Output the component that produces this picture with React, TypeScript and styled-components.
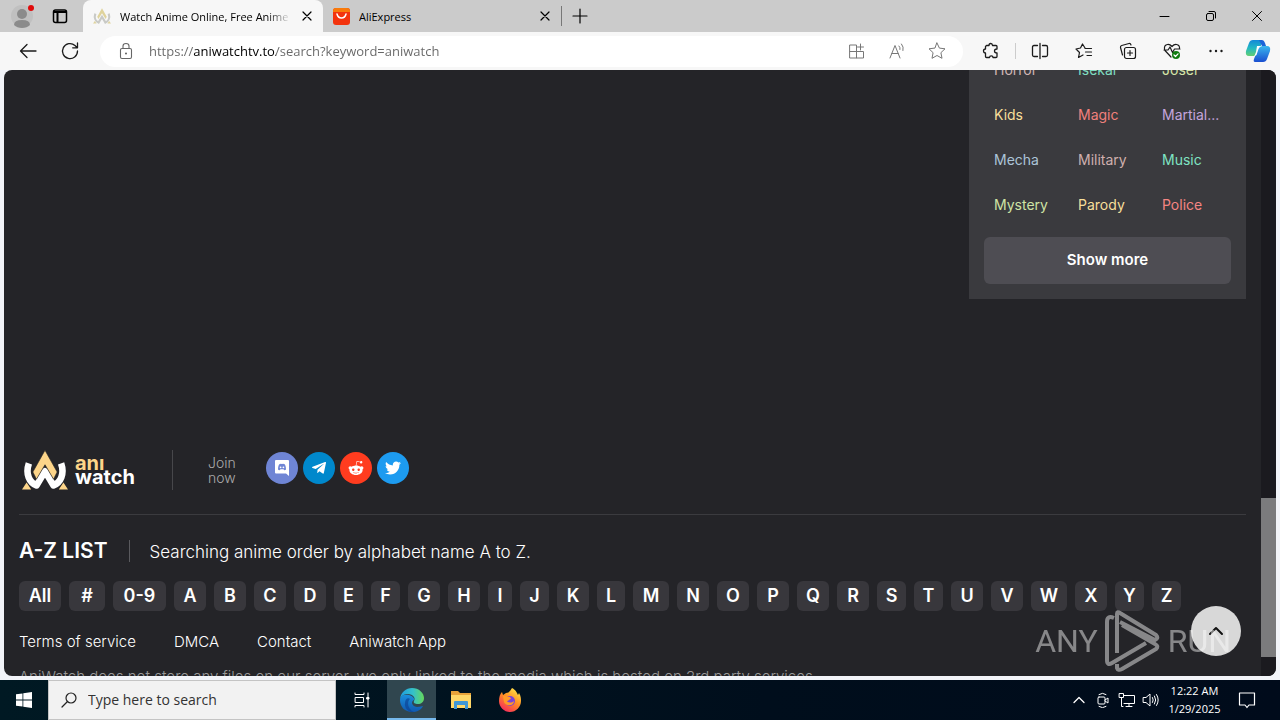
import React from "react";
import styled, { createGlobalStyle } from "styled-components";
import { FaTelegramPlane, FaRedditAlien, FaTwitter } from "react-icons/fa";

const uiFont = `"Open Sans", "Noto Sans", sans-serif`;
const siteFont = `Inter, "Liberation Sans", sans-serif`;

const GlobalStyle = createGlobalStyle`
  *, *::before, *::after { box-sizing: border-box; }
  body { margin: 0; font-family: ${uiFont}; overflow: hidden; }
  button { border: 0; padding: 0; background: none; color: inherit; font: inherit; cursor: pointer; }
  a { color: inherit; text-decoration: none; }
  h2, p, ul { margin: 0; padding: 0; }
  svg { display: block; flex: none; }
`;

const Desktop = styled.div`
  display: flex;
  flex-direction: column;
  height: 100vh;
`;

/* ---------- browser chrome ---------- */

const Browser = styled.div`
  flex: 1;
  min-height: 0;
  display: flex;
  flex-direction: column;
  background: #f2f4f9;
`;

const TabStrip = styled.div`
  display: flex;
  height: 32px;
  background: #cbcbcb;
`;

const ProfileArea = styled.div`
  display: flex;
  align-items: center;
  gap: 16px;
  width: 83px;
  padding-left: 10px;
`;

const Tab = styled.div<{ $active?: boolean }>`
  display: flex;
  align-items: center;
  width: ${(p) => (p.$active ? 240 : 238)}px;
  padding: 0 9px 0 ${(p) => (p.$active ? 10 : 10)}px;
  gap: 9px;
  background: ${(p) => (p.$active ? "#f7f7f7" : "transparent")};
  border-radius: 8px 8px 0 0;
  font-size: 11px;
  color: #000;
`;

const TabTitle = styled.span<{ $fade?: boolean }>`
  flex: 1;
  min-width: 0;
  overflow: hidden;
  white-space: nowrap;
  ${(p) => p.$fade && "mask-image: linear-gradient(to right, #000 86%, transparent);"}
`;

const TabDivider = styled.div`
  width: 1px;
  height: 20px;
  margin: 6px 10px 0 0;
  background: #777;
`;

const WindowControls = styled.div`
  display: flex;
  align-items: center;
  margin-left: auto;
`;

const WindowButton = styled.button`
  display: grid;
  place-items: center;
  width: 46px;
  height: 32px;
`;

const Toolbar = styled.div`
  display: flex;
  align-items: center;
  height: 38px;
  padding: 0 2px 0 16px;
  background: #f7f7f7;
`;

const IconButton = styled.button<{ $width?: number; $muted?: boolean }>`
  display: grid;
  place-items: center;
  width: ${(p) => p.$width ?? 44}px;
  height: 24px;
  color: ${(p) => (p.$muted ? "#777" : "#1b1b1b")};
`;

const AddressBar = styled.div`
  flex: 1;
  display: flex;
  align-items: center;
  height: 31px;
  margin: 0 6px 0 0;
  padding: 0 6px 0 16px;
  border-radius: 16px;
  background: #fff;
  color: #666;
`;

const AddressInput = styled.input`
  flex: 1;
  min-width: 0;
  margin-left: 13px;
  padding: 0;
  border: 0;
  outline: 0;
  font: 13px/20px ${uiFont};
  color: #666;
  background: linear-gradient(to right, #666 45px, #000 45px, #000 127px, #666 127px);
  background-clip: text;
  -webkit-text-fill-color: transparent;
`;

const ToolDivider = styled.div`
  width: 1px;
  height: 16px;
  margin: 0 2px;
  background: #ccc;
`;

/* ---------- web page ---------- */

const Viewport = styled.div`
  position: relative;
  flex: 1;
  min-height: 0;
  display: flex;
  margin: 0 4px 4px;
  border-radius: 8px;
  overflow: hidden;
  background: #242428;
  font-family: ${siteFont};
  color: #fff;
`;

const Page = styled.main`
  flex: 1;
  min-width: 0;
  padding: 0 15px;
`;

const GenrePanel = styled.section`
  width: 277px;
  margin: -23px 0 150px auto;
  padding: 0 15px 15px;
  background: #3a3a3e;
`;

const GenreGrid = styled.div`
  display: grid;
  grid-template-columns: 84px 84px 79px;
  grid-auto-rows: 45px;
  align-items: center;
  font-size: 14px;
`;

const GenreLink = styled.a<{ $color: string }>`
  padding: 0 0 0 10px;
  white-space: nowrap;
  color: ${(p) => p.$color};
`;

const ShowMore = styled.button`
  width: 100%;
  height: 47px;
  margin-top: 10px;
  padding-bottom: 2px;
  border-radius: 6px;
  background: #4e4d53;
  font-size: 15px;
  font-weight: 600;
`;

const FooterTop = styled.div`
  display: flex;
  align-items: center;
  height: 66px;
  padding-bottom: 24px;
  border-bottom: 1px solid #3b3b3f;
`;

const Brand = styled.a`
  display: flex;
  align-items: center;
  gap: 7px;
  width: 154px;
  height: 40px;
  padding-left: 3px;
  border-right: 1px solid #47474b;
`;

const BrandName = styled.span`
  font-size: 20px;
  font-weight: 700;
  line-height: 14px;
`;

const Gold = styled.span`
  display: block;
  color: #fdd589;
`;

const JoinText = styled.span`
  width: 58px;
  margin-left: 35px;
  font-size: 14px;
  font-weight: 300;
  line-height: 15px;
  color: #aaa;
`;

const Socials = styled.div`
  display: flex;
  gap: 5px;
  margin-bottom: 4px;
`;

const SocialLink = styled.a<{ $color: string }>`
  display: grid;
  place-items: center;
  width: 32px;
  height: 32px;
  border-radius: 50%;
  background: ${(p) => p.$color};
`;

const ListHeader = styled.div`
  display: flex;
  align-items: center;
  height: 24px;
  margin: 24px 0 18px;
`;

const ListTitle = styled.h2`
  padding-right: 21px;
  border-right: 1px solid #5a5a5e;
  font-size: 21px;
  font-weight: 600;
  line-height: 22px;
`;

const ListHint = styled.p`
  padding: 2px 0 0 20px;
  font-size: 17px;
  font-weight: 300;
`;

const Letters = styled.div`
  display: flex;
  gap: 8px;
`;

const LetterLink = styled.a<{ $width: number }>`
  width: ${(p) => p.$width}px;
  border-radius: 6px;
  background: #38373c;
  font-size: 18px;
  font-weight: 600;
  line-height: 29px;
  padding-bottom: 1px;
  text-align: center;
`;

const FooterLinks = styled.nav`
  display: flex;
  gap: 38px;
  margin: 21px 0 15px;
  font-size: 15px;
  font-weight: 300;
  line-height: 20px;
`;

const Disclaimer = styled.p`
  font-size: 15px;
  font-weight: 300;
  line-height: 20px;
  white-space: nowrap;
  color: #999;
`;

const ScrollTrack = styled.div`
  display: flex;
  flex-direction: column;
  width: 15px;
  background: #1b1a1f;
`;

const ScrollGap = styled.div<{ $share: number }>`
  flex: ${(p) => p.$share};
`;

const ScrollThumb = styled.div`
  flex: 159;
  background: #7b7b7d;
`;

const ToTop = styled.button`
  position: absolute;
  right: 35px;
  bottom: 20px;
  display: grid;
  place-items: center;
  width: 50px;
  height: 50px;
  border-radius: 50%;
  background: #d8d8d8;
  color: #111;
`;

const Watermark = styled.div`
  position: absolute;
  right: 45px;
  bottom: 4px;
  display: flex;
  align-items: center;
  gap: 7px;
  height: 62px;
  font: 32px/62px Roboto, "Liberation Sans", sans-serif;
  color: #fff;
  opacity: 0.45;
  pointer-events: none;
`;

/* ---------- taskbar ---------- */

const Taskbar = styled.footer`
  display: flex;
  align-items: stretch;
  height: 40px;
  background: linear-gradient(to right, #001923, #000e1c 60%, #000b1b);
  color: #fff;
`;

const TaskButton = styled.button<{ $active?: boolean; $width?: number }>`
  display: grid;
  place-items: center;
  width: ${(p) => p.$width ?? 49}px;
  background: ${(p) => (p.$active ? "#30464f" : "transparent")};
  border-bottom: 2px solid ${(p) => (p.$active ? "#76b9ed" : "transparent")};
  border-top: 2px solid transparent;
`;

const SearchBox = styled.label`
  display: flex;
  align-items: center;
  gap: 11px;
  width: 288px;
  padding: 0 12px;
  border: 1px solid #c4c4c4;
  background: #f2f2f2;
  color: #222;
`;

const SearchInput = styled.input`
  flex: 1;
  min-width: 0;
  padding: 0;
  border: 0;
  outline: 0;
  background: none;
  font: 14px/20px ${uiFont};
  &::placeholder { color: #333; opacity: 1; }
`;

const Tray = styled.div`
  display: flex;
  align-items: center;
  margin-left: auto;
  padding-right: 21px;
`;

const TrayButton = styled.button`
  display: grid;
  place-items: center;
  width: 24px;
  height: 40px;
`;

const Clock = styled.time`
  width: 63px;
  margin: 0 9px 0 0;
  font-size: 11px;
  line-height: 18px;
  text-align: center;
  white-space: nowrap;
`;

/* ---------- icons ---------- */

type StrokeProps = { size?: number; width?: number; children: React.ReactNode };

const Stroke = ({ size = 20, width = 1, children }: StrokeProps) => (
  <svg width={size} height={size} viewBox={`0 0 ${size} ${size}`} fill="none" stroke="currentColor" strokeWidth={width} strokeLinecap="round" strokeLinejoin="round" aria-hidden="true">
    {children}
  </svg>
);

const CloseGlyph = ({ size = 14 }: { size?: number }) => (
  <Stroke size={size} width={1.2}>
    <path d={`M3 3L${size - 3} ${size - 3}M${size - 3} 3L3 ${size - 3}`} />
  </Stroke>
);

const LogoMark = () => (
  <svg width="46" height="40" viewBox="0 0 140 120" aria-hidden="true">
    <path d="M21 40C10 72 22 98 44 107L70 64L96 107C118 98 130 72 119 40" fill="none" stroke="#fff" strokeWidth="20" strokeLinejoin="round" />
    <path d="M70 0L107 66L96 88L70 44L44 88L33 66Z" fill="#fdd589" stroke="#242428" strokeWidth="2" />
    <path d="M0 119L14 98L28 119ZM140 119L126 98L112 119Z" fill="#fdd589" />
  </svg>
);

const Discord = () => (
  <svg width="16" height="18" viewBox="0 0 16 18" aria-hidden="true">
    <path fill="#fff" d="M2 1H14a1 1 0 0 1 1 1V17L12 14.500H2a1 1 0 0 1-1-1V2a1 1 0 0 1 1-1Z" />
    <path fill="#6f85d5" d="M4 10.500C4 8 4.600 6 5.300 5.200Q6.500 4.500 8 5Q9.500 4.500 10.700 5.200C11.400 6 12 8 12 10.500Q11 11.500 10 11L9.500 10.200H6.500L6 11Q5 11.500 4 10.500Z" />
    <circle cx="6.600" cy="8.300" r="0.900" fill="#fff" />
    <circle cx="9.400" cy="8.300" r="0.900" fill="#fff" />
  </svg>
);

const Copilot = () => (
  <svg width="26" height="24" viewBox="0 0 26 24" aria-hidden="true">
    <defs>
      <linearGradient id="cpA" x1="0" y1="0" x2="0" y2="1">
        <stop offset="0" stopColor="#1488d8" />
        <stop offset="0.500" stopColor="#22b8c4" />
        <stop offset="1" stopColor="#63cf72" />
      </linearGradient>
      <linearGradient id="cpB" x1="0" y1="0" x2="0" y2="1">
        <stop offset="0" stopColor="#39b6ee" />
        <stop offset="1" stopColor="#1a4fd0" />
      </linearGradient>
    </defs>
    <path fill="url(#cpA)" d="M8 1H16Q18 1 17 4L13 14Q12 17 9 17H4Q0 17 1 12L4 4Q5 1 8 1Z" />
    <path fill="url(#cpB)" d="M18 23H10Q8 23 9 20L13 10Q14 7 17 7H22Q26 7 25 12L22 20Q21 23 18 23Z" />
    <path fill="#fff" d="M12 7H17Q14.500 7.500 13.500 10L11.500 16Q10.500 17 9 17Q10 16 11 13Z" />
    <path fill="#1b63d8" d="M14 1H17Q19 1 20 4L21 7H17L15 3Z" />
  </svg>
);

const EdgeLogo = () => (
  <svg width="26" height="26" viewBox="0 0 26 26" aria-hidden="true">
    <defs>
      <linearGradient id="edgeTop" x1="0" y1="0.500" x2="1" y2="0.500">
        <stop offset="0" stopColor="#1e9de0" />
        <stop offset="0.550" stopColor="#35c1c9" />
        <stop offset="1" stopColor="#66d85a" />
      </linearGradient>
      <linearGradient id="edgeBody" x1="0" y1="0" x2="0" y2="1">
        <stop offset="0" stopColor="#1b8fdc" />
        <stop offset="1" stopColor="#1059b0" />
      </linearGradient>
    </defs>
    <path fill="url(#edgeBody)" d="M1 13C1 8 6 7 10 8C14 9 16 12 15 13C12 14 12 19 18 20C21 20 23 19 24 19C22 23 18 25 13 25C6 25 1 20 1 13Z" />
    <path fill="#0d4595" d="M11 12C8 14 8 22 15 25C10 26 5 21 6 16C6 12 9 10 11 12Z" opacity="0.7" />
    <path fill="url(#edgeTop)" d="M1 12C2 5 7 1 13 1C20 1 25 6 25 11C25 15 22 17 19 17C16 17 14 16 15 14C17 11 14 7 9 7C5 7 2 9 1 12Z" />
  </svg>
);

const FolderLogo = () => (
  <svg width="22" height="20" viewBox="0 0 22 20" aria-hidden="true">
    <path fill="#e8a33a" d="M1 1H8L10 3H21V7H1Z" />
    <path fill="#ffd768" d="M1 5H21V18H1Z" />
    <path fill="#3f97d6" d="M4 19V12Q4 11 5 11H17Q18 11 18 12V19H15V15H7V19Z" />
  </svg>
);

const FirefoxLogo = () => (
  <svg width="24" height="24" viewBox="0 0 24 24" aria-hidden="true">
    <defs>
      <linearGradient id="fx" x1="0.800" y1="0" x2="0.200" y2="1">
        <stop offset="0" stopColor="#ffe84a" />
        <stop offset="0.450" stopColor="#ff9023" />
        <stop offset="1" stopColor="#f5245f" />
      </linearGradient>
    </defs>
    <path fill="url(#fx)" d="M14 0C18 2 19 5 20 7L21 5C23 8 23 11 23 13C23 19 18 24 12 24S1 19 1 13C1 9 2 6 4 4L5 7L8 5C10 5 11 4 12 3Z" />
    <circle cx="12" cy="13" r="5" fill="#7a43d8" />
    <path fill="#ff9a28" d="M5 8C8 7 9 9 12 9L13 11C11 11 11 13 9 13C10 15 14 15 16 13C16 18 8 19 6 14Z" />
  </svg>
);

const PlayMark = () => (
  <svg width="56" height="62" viewBox="0 0 56 62" fill="none" stroke="currentColor" strokeWidth="4" strokeLinejoin="round" aria-hidden="true">
    <path d="M9 8Q2 5 2 12V50Q2 56 7 53L41 33" />
    <path d="M12 43V4Q12 1 15 3L51 25Q54 28 50 30L15 12" />
    <path d="M12 54V58Q13 61 17 59L51 39Q54 36 50 34L17 15" />
  </svg>
);

/* ---------- data ---------- */

const genres = [
  ["Horror", "#d0b6b4"], ["Isekai", "#7fdcc0"], ["Josei", "#d5e5a8"],
  ["Kids", "#f7df9a"], ["Magic", "#f0807c"], ["Martial...", "#c5a5dc"],
  ["Mecha", "#abc4d8"], ["Military", "#d0b0ae"], ["Music", "#7fe3c3"],
  ["Mystery", "#cfe3a4"], ["Parody", "#f7df9a"], ["Police", "#f58583"],
];

const letters = ["All", "#", "0-9", ..."ABCDEFGHIJKLMNOPQRSTUVWXYZ"];

const letterWidth = (label: string) => {
  if (label === "0-9") return 53;
  if (label === "All") return 42;
  if ("#MW".includes(label)) return 36;
  if ("EFJSTYZ".includes(label)) return 29;
  if (label === "L") return 28;
  if (label === "I") return 24;
  return 32;
};

export default function App() {
  return (
    <>
      <GlobalStyle />
      <Desktop>
        <Browser>
          <TabStrip>
            <ProfileArea>
              <svg width="26" height="26" viewBox="0 0 26 26" aria-hidden="true">
                <circle cx="12" cy="13" r="11" fill="#c0c0c0" />
                <circle cx="12" cy="11" r="5" fill="#8b8b8b" />
                <path d="M4 22Q4 17 12 17T20 22Q17 25 12 25T4 22Z" fill="#8b8b8b" />
                <circle cx="21" cy="5" r="3" fill="#e00b0b" />
              </svg>
              <Stroke size={16} width={1.5}>
                <rect x="1.500" y="2" width="13" height="12.500" rx="2" />
                <path d="M2 4H14M5.500 5V14" strokeWidth="2" />
              </Stroke>
            </ProfileArea>
            <Tab $active>
              <svg width="18" height="16" viewBox="0 0 140 120" aria-hidden="true">
                <path d="M18 42C8 74 20 102 43 111L70 66L97 111C120 102 132 74 122 42" fill="none" stroke="#c9cac6" strokeWidth="17" />
                <path d="M70 0L107 66L98 84L70 38L42 84L33 66Z" fill="#dfd39c" />
                <path d="M0 119L14 98L28 119ZM140 119L126 98L112 119Z" fill="#dfd39c" />
              </svg>
              <TabTitle $fade>Watch Anime Online, Free Anime</TabTitle>
              <button aria-label="Close tab"><CloseGlyph /></button>
            </Tab>
            <Tab>
              <svg width="17" height="17" viewBox="0 0 17 17" aria-hidden="true">
                <rect width="17" height="17" rx="3" fill="#f3330d" />
                <path d="M0 4V3Q0 0 3 0H14Q17 0 17 3V4Z" fill="#f97a0a" />
                <path d="M4 6Q5 10 8.500 10T13 6" fill="none" stroke="#fff" strokeWidth="1.500" strokeLinecap="round" />
              </svg>
              <TabTitle>AliExpress</TabTitle>
              <button aria-label="Close tab"><CloseGlyph /></button>
            </Tab>
            <TabDivider />
            <button aria-label="New tab">
              <Stroke size={16} width={1.2}><path d="M8 1V15M1 8H15" /></Stroke>
            </button>
            <WindowControls>
              <WindowButton aria-label="Minimize"><Stroke size={12}><path d="M1 6.500H10" /></Stroke></WindowButton>
              <WindowButton aria-label="Restore">
                <Stroke size={12}><rect x="1.500" y="3.500" width="7" height="7" rx="1.500" /><path d="M4 1.500H9Q10.500 1.500 10.500 3V8" /></Stroke>
              </WindowButton>
              <WindowButton aria-label="Close"><Stroke size={12}><path d="M1.500 1.500L10.500 10.500M10.500 1.500L1.500 10.500" /></Stroke></WindowButton>
            </WindowControls>
          </TabStrip>

          <Toolbar>
            <IconButton $width={24} aria-label="Back"><Stroke width={1.3}><path d="M18 10H2.500M9 3.500L2.500 10L9 16.500" /></Stroke></IconButton>
            <IconButton $width={60} aria-label="Refresh"><Stroke width={1.3}><path d="M17.500 10A7.500 7.500 0 1 1 15 4.500L17 6.500M17.500 2V6.800H12.700" /></Stroke></IconButton>
            <AddressBar>
              <Stroke size={20} width={1.1}>
                <rect x="4.500" y="7.500" width="11" height="10" rx="1.500" />
                <path d="M7 7.500V5Q7 2.500 10 2.500T13 5V7.500" />
                <circle cx="10" cy="12.500" r="0.500" />
              </Stroke>
              <AddressInput aria-label="Address" type="text" defaultValue="https://aniwatchtv.to/search?keyword=aniwatch" />
              <IconButton $width={40} $muted aria-label="App available">
                <Stroke><path d="M3 4H9.500V17H3ZM3 10.500H16.500V17H9.500M13.500 3V9M10.500 6H16.500" /></Stroke>
              </IconButton>
              <IconButton $width={40} $muted aria-label="Read aloud">
                <Stroke><path d="M3 17L8 4.500L13 17M4.800 12.500H11.200M12 5Q13.500 6.500 13 8.500M14.500 3Q17 6 16 9.500" /></Stroke>
              </IconButton>
              <IconButton $width={40} $muted aria-label="Add to favorites">
                <Stroke><path d="M10 2L12.400 7.100L18 7.800L13.900 11.700L15 17.300L10 14.500L5 17.300L6.100 11.700L2 7.800L7.600 7.100Z" /></Stroke>
              </IconButton>
            </AddressBar>
            <IconButton aria-label="Extensions">
              <Stroke width={1.3}><path d="M5.500 4.500H8Q8 2.500 9.700 2.500T11.500 4.500H15Q16 4.500 16 5.500V8Q13.500 8 13.500 10T16 12V15.500Q16 16.500 15 16.500H12Q12 14.800 10.300 14.800T8.500 16.500H5.500Q4.500 16.500 4.500 15.500V12Q2.500 12 2.500 10T4.500 8V5.500Z" /></Stroke>
            </IconButton>
            <ToolDivider />
            <IconButton aria-label="Split screen">
              <Stroke width={1.3}><path d="M7.500 4.500H4Q2.500 4.500 2.500 6V14Q2.500 15.500 4 15.500H7.500M12.500 4.500H16Q17.500 4.500 17.500 6V14Q17.500 15.500 16 15.500H12.500M10 2.500V17.500" /></Stroke>
            </IconButton>
            <IconButton aria-label="Favorites">
              <Stroke width={1.2}><path d="M11 7L8.500 3L6.500 7L2 8L5.500 11.500L4.500 16.500L9 14M11 7.500H17.500M11.500 11H17.500M13 14.500H17.500" /></Stroke>
            </IconButton>
            <IconButton aria-label="Collections">
              <Stroke width={1.2}><rect x="6.500" y="6.500" width="11" height="11" rx="2" /><path d="M12 9.500V14.500M9.500 12H14.500M4.500 14L2.500 6.500Q2.200 5 3.700 4.500L11 2.500Q12.500 2.200 13 4" /></Stroke>
            </IconButton>
            <IconButton aria-label="Browser essentials">
              <Stroke width={1.2}>
                <path d="M9 16L3 9.500M2.500 8Q2 4 5.500 3.500Q8 3.200 10 5.500Q12 3.200 14.500 3.500Q18 4 17.500 8M2 9H6L8 6L10.500 11.500L12.500 8H18" />
                <circle cx="14" cy="14" r="4" fill="#107c10" stroke="none" />
                <path d="M12 14L13.500 15.500L16 12.800" stroke="#fff" />
              </Stroke>
            </IconButton>
            <IconButton aria-label="Settings and more">
              <svg width="20" height="20" viewBox="0 0 20 20" fill="currentColor" aria-hidden="true"><circle cx="4.500" cy="10" r="1.200" /><circle cx="10" cy="10" r="1.200" /><circle cx="15.500" cy="10" r="1.200" /></svg>
            </IconButton>
            <IconButton $width={40} aria-label="Copilot"><Copilot /></IconButton>
          </Toolbar>

          <Viewport>
            <Page>
              <GenrePanel>
                <GenreGrid>
                  {genres.map(([name, color]) => (
                    <GenreLink key={name} href="#" $color={color}>{name}</GenreLink>
                  ))}
                </GenreGrid>
                <ShowMore>Show more</ShowMore>
              </GenrePanel>

              <FooterTop>
                <Brand href="#">
                  <LogoMark />
                  <BrandName><Gold>anı</Gold>watch</BrandName>
                </Brand>
                <JoinText>Join<br />now</JoinText>
                <Socials>
                  <SocialLink href="#" $color="#6f85d5" aria-label="Discord"><Discord /></SocialLink>
                  <SocialLink href="#" $color="#0088cc" aria-label="Telegram"><FaTelegramPlane size={16} /></SocialLink>
                  <SocialLink href="#" $color="#ff3c1f" aria-label="Reddit"><FaRedditAlien size={16} /></SocialLink>
                  <SocialLink href="#" $color="#1d9bf0" aria-label="Twitter"><FaTwitter size={16} /></SocialLink>
                </Socials>
              </FooterTop>

              <ListHeader>
                <ListTitle>A-Z LIST</ListTitle>
                <ListHint>Searching anime order by alphabet name A to Z.</ListHint>
              </ListHeader>
              <Letters>
                {letters.map((letter) => (
                  <LetterLink key={letter} href="#" $width={letterWidth(letter)}>{letter}</LetterLink>
                ))}
              </Letters>
              <FooterLinks>
                <a href="#">Terms of service</a>
                <a href="#">DMCA</a>
                <a href="#">Contact</a>
                <a href="#">Aniwatch App</a>
              </FooterLinks>
              <Disclaimer>
                AniWatch does not store any files on our server, we only linked to the media which is hosted on 3rd party services.
              </Disclaimer>
            </Page>
            <ScrollTrack>
              <ScrollGap $share={428} />
              <ScrollThumb />
              <ScrollGap $share={19} />
            </ScrollTrack>
            <ToTop aria-label="Back to top">
              <Stroke size={16} width={2}><path d="M2 11L8 5L14 11" /></Stroke>
            </ToTop>
            <Watermark>
              <span>ANY</span>
              <PlayMark />
              <span>RUN</span>
            </Watermark>
          </Viewport>
        </Browser>

        <Taskbar>
          <TaskButton $width={48} aria-label="Start">
            <svg width="16" height="16" viewBox="0 0 16 16" fill="#fff" aria-hidden="true">
              <path d="M0 2.300L6.500 1.400V7.600H0ZM7.300 1.300L16 0V7.600H7.300ZM0 8.400H6.500V14.600L0 13.700ZM7.300 8.400H16V16L7.300 14.700Z" />
            </svg>
          </TaskButton>
          <SearchBox>
            <Stroke size={16} width={1.2}><circle cx="10" cy="6" r="5" /><path d="M6.500 9.500L1 15" /></Stroke>
            <SearchInput aria-label="Search" type="text" placeholder="Type here to search" />
          </SearchBox>
          <TaskButton $width={51} aria-label="Task view">
            <Stroke size={16}><path d="M1 1V2.500H10V1M1 15V13.500H10V15M1.500 5.500H9.500V10.500H1.500ZM14 1V15" /><path d="M13 5.500H15V7H13Z" fill="#fff" /></Stroke>
          </TaskButton>
          <TaskButton $active aria-label="Edge"><EdgeLogo /></TaskButton>
          <TaskButton aria-label="File Explorer"><FolderLogo /></TaskButton>
          <TaskButton aria-label="Firefox"><FirefoxLogo /></TaskButton>
          <Tray>
            <TrayButton aria-label="Show hidden icons"><Stroke size={14} width={1.3}><path d="M2 9.500L7 4.500L12 9.500" /></Stroke></TrayButton>
            <TrayButton aria-label="Meet now">
              <Stroke size={16}><rect x="3" y="5" width="7" height="7" rx="1" /><path d="M10 8L13 6V11L10 9M4 2.500Q7.500 0 11 2.500M4 14.500Q7.500 17 11 14.500" /></Stroke>
            </TrayButton>
            <TrayButton aria-label="Network">
              <Stroke size={18}><path d="M6 4.500H16.500V12.500H6M11 12.500V15.500M8 15.500H14M1.500 2.500H5.500V6.500H1.500ZM3.500 6.500V15.500H5" /></Stroke>
            </TrayButton>
            <TrayButton aria-label="Volume">
              <Stroke size={18}><path d="M1.500 6.500H4L8 3V15L4 11.500H1.500ZM10.500 6.500Q12 9 10.500 11.500M12.500 5Q15 9 12.500 13M14.500 3.500Q18 9 14.500 14.500" /></Stroke>
            </TrayButton>
            <Clock>12:22 AM<br />1/29/2025</Clock>
            <TrayButton aria-label="Notifications">
              <Stroke size={18} width={1.2}><path d="M1.500 2H16.500V14H11L9 16.500L7 14H1.500Z" /></Stroke>
            </TrayButton>
          </Tray>
        </Taskbar>
      </Desktop>
    </>
  );
}
